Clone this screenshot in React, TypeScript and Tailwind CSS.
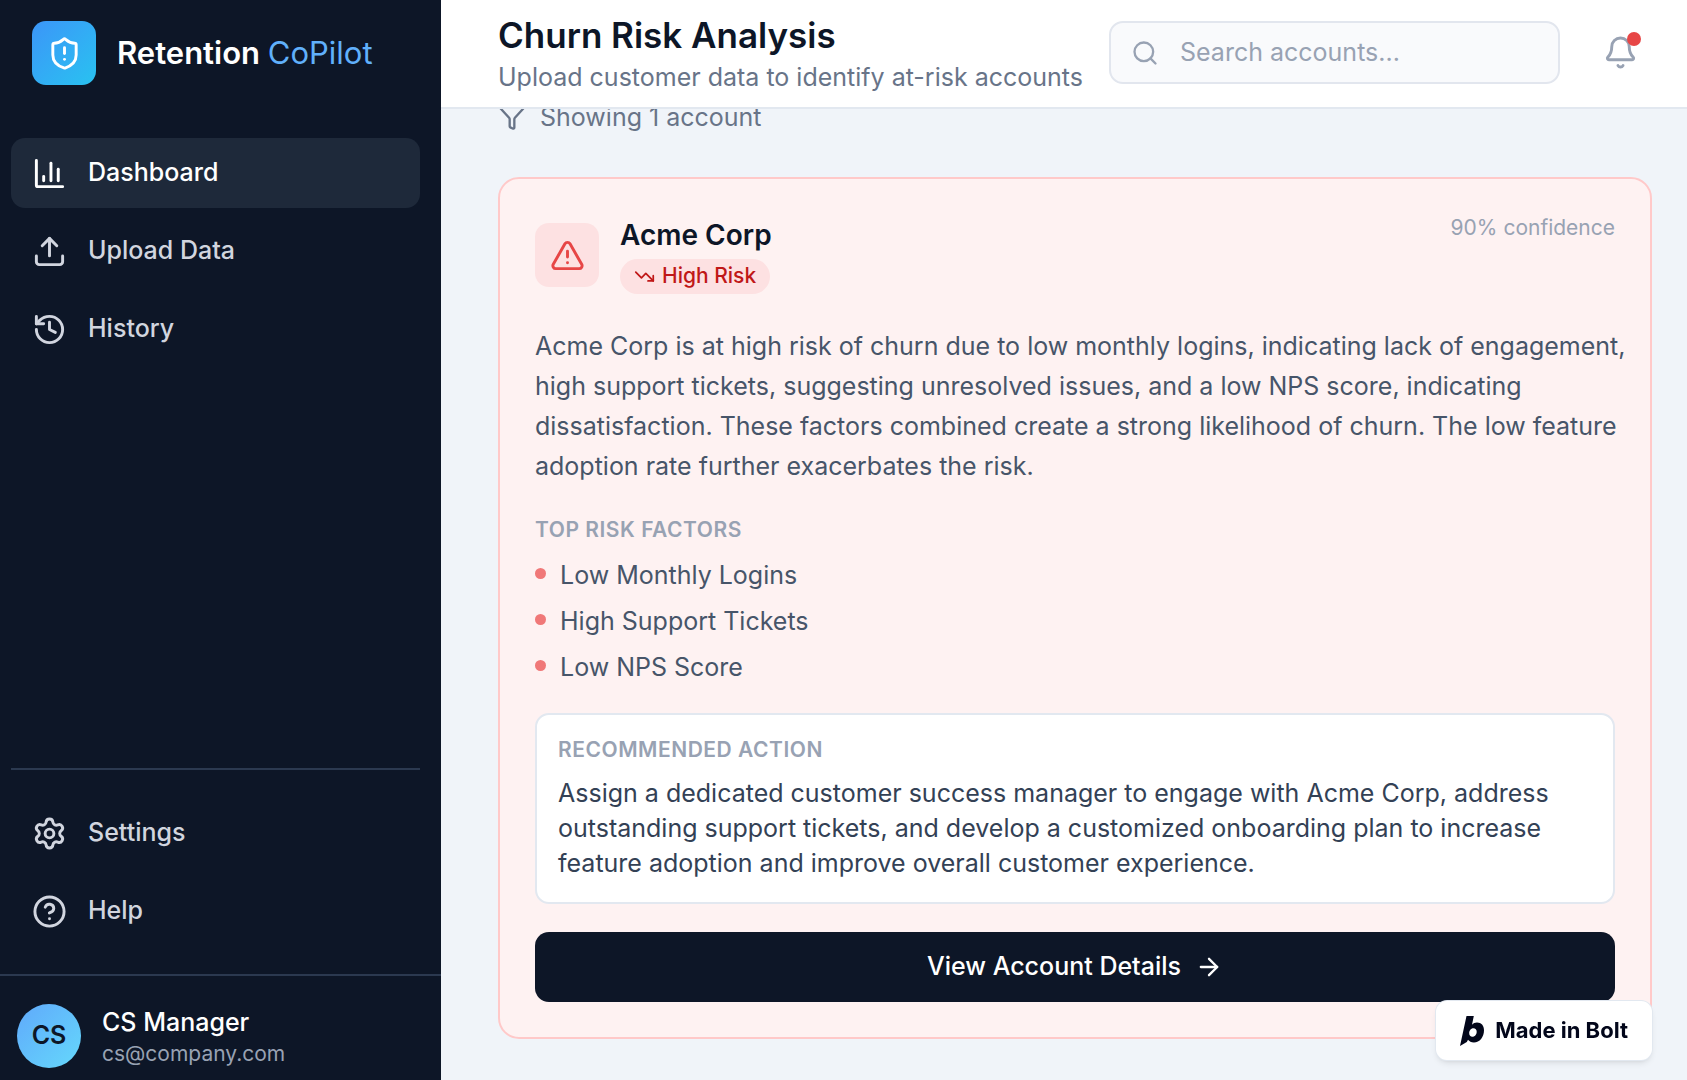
import React from "react";
import {
  ArrowRight,
  Bell,
  CircleHelp,
  Funnel,
  History,
  Search,
  Settings,
  TrendingDown,
  TriangleAlert,
  Upload,
} from "lucide-react";

const ICON = "size-[35px] shrink-0";

function ShieldLogo() {
  return (
    <svg className="size-[35px]" viewBox="0 0 24 24" fill="none" stroke="currentColor" strokeWidth={2} strokeLinecap="round" strokeLinejoin="round" aria-hidden="true">
      <path d="M20 13c0 5-3.5 7.5-7.66 8.95a1 1 0 0 1-.67-.01C7.5 20.5 4 18 4 13V6a1 1 0 0 1 1-1c2 0 4.5-1.2 6.24-2.72a1.17 1.17 0 0 1 1.52 0C14.51 3.81 17 5 19 5a1 1 0 0 1 1 1z" />
      <path d="M12 8v4" />
      <path d="M12 16h.01" />
    </svg>
  );
}

function BarsIcon() {
  return (
    <svg className={ICON} viewBox="0 0 24 24" fill="none" stroke="currentColor" strokeWidth={2} strokeLinecap="round" strokeLinejoin="round" aria-hidden="true">
      <path d="M3 3v17a1 1 0 0 0 1 1h17" />
      <path d="M18 17V9" />
      <path d="M13 17V5" />
      <path d="M8 17v-3" />
    </svg>
  );
}

function BoltMark() {
  return (
    <svg className="h-[30px] w-6" viewBox="0 0 24 30" fill="currentColor" aria-hidden="true">
      <path
        fillRule="evenodd"
        d="M6.5 0h7.3l-1.8 8.8c1.4-1.5 3-2.2 5-2.2 4.300 0 7 2.900 7 7.600C24 21 19.700 26.400 13.900 26.400c-2.700 0-4.700-1-5.900-2.600L6.800 26 0 30zM13.400 12.300c-2.400 0-4.200 2.200-4.200 4.900 0 2.100 1.300 3.500 3.200 3.500 2.500 0 4.300-2.200 4.300-5 0-2.100-1.300-3.400-3.300-3.400z"
      />
    </svg>
  );
}

type NavItemProps = { icon: React.ReactNode; label: string; active?: boolean };

function NavItem({ icon, label, active }: NavItemProps) {
  return (
    <a
      href="#"
      aria-current={active ? "page" : undefined}
      className={
        active
          ? "flex h-[70px] items-center gap-[21px] rounded-[14px] bg-[#1e293a] pl-[21px] text-[25px] font-medium text-white"
          : "flex h-[70px] items-center gap-[21px] rounded-[14px] pl-[21px] text-[25px] font-medium text-[#d1d5df]"
      }
    >
      {icon}
      {label}
    </a>
  );
}

function Sidebar() {
  return (
    <aside className="flex w-[441px] shrink-0 flex-col bg-[#0d1627]">
      <div className="flex items-center gap-[21px] pt-[21px] pl-8">
        <div className="flex size-16 items-center justify-center rounded-[14px] bg-linear-to-br from-[#3b95f8] to-[#28c2f0] text-white">
          <ShieldLogo />
        </div>
        <p className="text-[31px] font-semibold text-white">
          Retention <span className="font-normal text-[#60b0fb]">CoPilot</span>
        </p>
      </div>
      <nav className="mt-[53px] mr-[21px] ml-[11px] flex flex-1 flex-col gap-2">
        <NavItem active icon={<BarsIcon />} label="Dashboard" />
        <NavItem icon={<Upload className={ICON} strokeWidth={2} />} label="Upload Data" />
        <NavItem icon={<History className={ICON} strokeWidth={2} />} label="History" />
      </nav>
      <nav className="mr-[21px] mb-7 ml-[11px] flex flex-col gap-2 border-t-2 border-[#2b3950] pt-7">
        <NavItem icon={<Settings className={ICON} strokeWidth={2} />} label="Settings" />
        <NavItem icon={<CircleHelp className={ICON} strokeWidth={2} />} label="Help" />
      </nav>
      <div className="flex items-center gap-[21px] border-t-2 border-[#2b3950] pt-7 pb-3 pl-[17px]">
        <div className="flex size-16 items-center justify-center rounded-full bg-linear-to-br from-[#60a9fb] to-[#65d8fb] text-[25px] font-semibold text-[#0d1627]">
          CS
        </div>
        <div>
          <p className="text-[25px] leading-[35px] font-medium text-white">CS Manager</p>
          <p className="text-[21px] leading-7 text-[#98a2b3]">cs@company.com</p>
        </div>
      </div>
    </aside>
  );
}

function Header() {
  return (
    <header className="relative z-10 flex h-[109px] shrink-0 items-center justify-between gap-4 border-b-2 border-[#e2e8f0] bg-white pr-[35px] pb-0.5 pl-[57px]">
      <div>
        <h1 className="text-[35px] leading-[48px] font-semibold text-[#0d1627]">Churn Risk Analysis</h1>
        <p className="text-[25px] leading-9 whitespace-nowrap text-[#687488]">Upload customer data to identify at-risk accounts</p>
      </div>
      <div className="flex items-center gap-7">
        <label className="flex h-[63px] w-[451px] items-center gap-[21px] rounded-[14px] border-2 border-[#e2e6ee] bg-[#f9fafc] px-5 text-[#98a2b3]">
          <Search className="size-7 shrink-0" strokeWidth={2} />
          <input
            type="text"
            aria-label="Search accounts"
            placeholder="Search accounts..."
            className="w-full bg-transparent text-[25px] outline-none placeholder:text-[#98a2b3]"
          />
        </label>
        <button type="button" aria-label="Notifications" className="relative flex size-16 items-center justify-center text-[#98a2b3]">
          <Bell className="size-[35px]" strokeWidth={2} />
          <span className="absolute top-[11px] right-[11px] size-[14px] rounded-full bg-[#e74646]" />
        </button>
      </div>
    </header>
  );
}

const factors = ["Low Monthly Logins", "High Support Tickets", "Low NPS Score"];

function AccountCard() {
  return (
    <article className="rounded-[21px] border-2 border-[#ffc9c9] bg-[#fef2f2] p-[35px]">
      <div className="flex items-start justify-between">
        <div className="flex items-center gap-[21px]">
          <div className="flex size-16 items-center justify-center rounded-[14px] bg-[#fde1e2] text-[#e74646]">
            <TriangleAlert className="size-[35px]" strokeWidth={2} />
          </div>
          <div>
            <h2 className="text-[28px] leading-[42px] font-semibold text-[#0d1627]">Acme Corp</h2>
            <div className="flex h-10 items-center">
              <span className="flex h-[35px] items-center gap-[7px] rounded-full bg-[#fde1e2] px-[14px] text-[21px] font-medium text-[#c01818]">
                <TrendingDown className="size-[21px]" strokeWidth={2} />
                High Risk
              </span>
            </div>
          </div>
        </div>
        <span className="text-[21px] leading-7 text-[#98a2b3]">90% confidence</span>
      </div>
      <p className="mt-[30px] -mr-3 text-[25px] leading-10 text-[#475569]">
        Acme Corp is at high risk of churn due to low monthly logins, indicating lack of engagement, high support
        tickets, suggesting unresolved issues, and a low NPS score, indicating dissatisfaction. These factors combined
        create a strong likelihood of churn. The low feature adoption rate further exacerbates the risk.
      </p>
      <h3 className="mt-[30px] text-[21px] leading-7 font-semibold tracking-wide text-[#98a2b3] uppercase">Top Risk Factors</h3>
      <ul className="mt-[14px] flex flex-col gap-[11px]">
        {factors.map((factor) => (
          <li key={factor} className="flex items-start gap-[14px] text-[25px] leading-[35px] text-[#475569]">
            <span className="mt-[10px] size-[11px] shrink-0 rounded-full bg-[#f07878]" />
            {factor}
          </li>
        ))}
      </ul>
      <section className="mt-7 rounded-[14px] border-2 border-[#e2e8f0] bg-white p-[21px]">
        <h3 className="text-[21px] leading-7 font-semibold tracking-wide text-[#98a2b3] uppercase">Recommended Action</h3>
        <p className="mt-3 text-[25px] leading-[35px] text-[#334155]">
          Assign a dedicated customer success manager to engage with Acme Corp, address outstanding support tickets, and
          develop a customized onboarding plan to increase feature adoption and improve overall customer experience.
        </p>
      </section>
      <button type="button" className="mt-7 flex h-[70px] w-full items-center justify-center gap-[14px] rounded-[14px] bg-[#0d1627] text-[25px] font-medium text-white">
        View Account Details
        <ArrowRight className="size-7" strokeWidth={2} />
      </button>
    </article>
  );
}

export default function App() {
  return (
    <div className="flex h-screen overflow-hidden bg-[#f0f4f9] font-['Inter',sans-serif]">
      <Sidebar />
      <div className="flex min-w-0 flex-1 flex-col">
        <Header />
        <main className="-mt-[10px] flex flex-1 flex-col gap-[42px] pr-[35px] pl-[57px]">
          <p className="flex items-center gap-[14px] text-[25px] leading-9 text-[#687488]">
            <Funnel className="size-7" strokeWidth={2} />
            Showing 1 account
          </p>
          <AccountCard />
        </main>
      </div>
      <a
        href="#"
        className="fixed right-[35px] bottom-5 flex h-[59px] items-center gap-[11px] rounded-[11px] bg-white px-6 text-[22px] font-bold text-[#02061a] shadow-md ring-1 ring-[#e2e8f0]"
      >
        <BoltMark />
        Made in Bolt
      </a>
    </div>
  );
}
